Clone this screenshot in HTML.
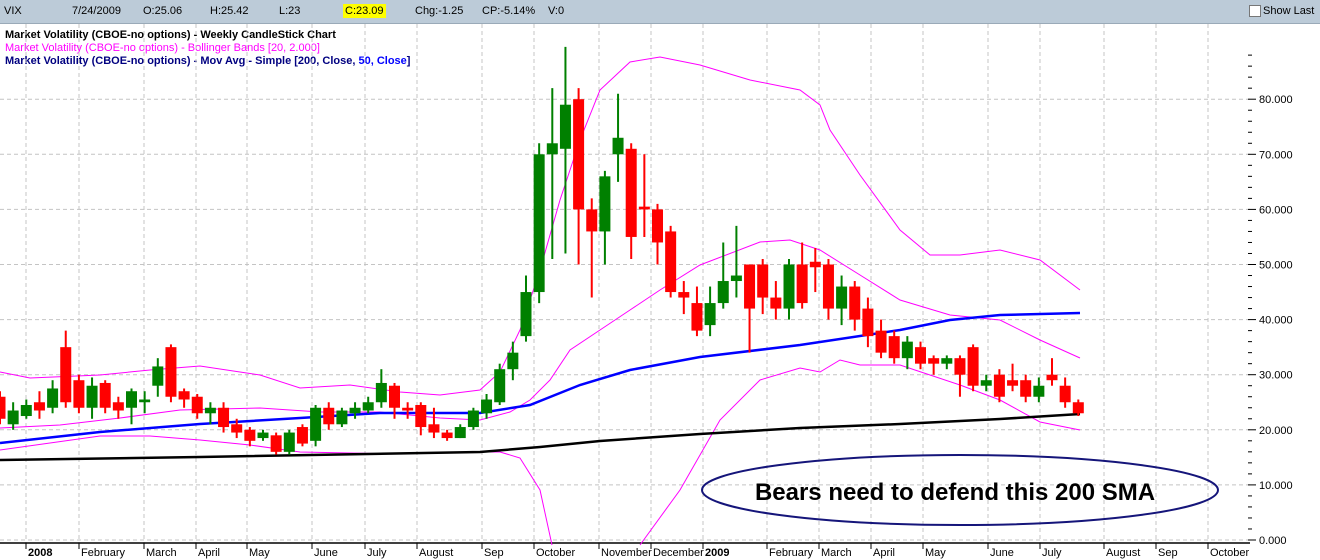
<!DOCTYPE html>
<html><head><meta charset="utf-8"><style>
body{margin:0;width:1320px;height:560px;overflow:hidden;background:#fff;font-family:"Liberation Sans",Tahoma,sans-serif}
#top{position:absolute;left:0;top:0;width:1320px;height:23px;background:#bccbd8;border-bottom:1px solid #9aaab8;font-size:11px;color:#000}
#top span{position:absolute;top:5px}
svg{position:absolute;left:0;top:0}
</style></head><body>
<div id="top">
<span style="left:4px">VIX</span>
<span style="left:72px">7/24/2009</span>
<span style="left:143px">O:25.06</span>
<span style="left:210px">H:25.42</span>
<span style="left:279px">L:23</span>
<span style="left:343px;top:4px;background:#ffff00;padding:1px 2px">C:23.09</span>
<span style="left:415px">Chg:-1.25</span>
<span style="left:482px">CP:-5.14%</span>
<span style="left:548px">V:0</span>
<span style="left:1249px;top:5px;width:10px;height:10px;border:1px solid #777;background:#fff"></span>
<span style="left:1263px">Show Last</span>
</div>
<svg id="c" width="1320" height="560" viewBox="0 0 1320 560" style="top:0">
<g font-size="11" font-weight="bold">
<text x="5" y="38" fill="#000">Market Volatility (CBOE-no options) - Weekly CandleStick Chart</text>
<text x="5" y="51" fill="#ff00ff" font-weight="normal">Market Volatility (CBOE-no options) - Bollinger Bands [20, 2.000]</text>
<text x="5" y="64" fill="#000080">Market Volatility (CBOE-no options) - Mov Avg - Simple [200, Close, <tspan fill="#0000ff">50, Close</tspan>]</text>
</g>
</svg>
<script>
const s=document.getElementById('c'),NS='http://www.w3.org/2000/svg';
function el(t,a,txt){const e=document.createElementNS(NS,t);for(const k in a)e.setAttribute(k,a[k]);if(txt)e.textContent=txt;s.insertBefore(e,s.firstChild.nextSibling?null:null);s.appendChild(e);return e}
const Y=v=>540-5.51*v;
// grid
const months=[[26,'2008',1],[79,'February'],[144,'March'],[196,'April'],[247,'May'],[312,'June'],[365,'July'],[417,'August'],[482,'Sep'],[534,'October'],[599,'November'],[651,'December'],[703,'2009',1],[767,'February'],[819,'March'],[871,'April'],[923,'May'],[988,'June'],[1040,'July'],[1104,'August'],[1156,'Sep'],[1208,'October']];
months.forEach(m=>{el('line',{x1:m[0],x2:m[0],y1:24,y2:543,stroke:'#c4c4c4','stroke-dasharray':'4,3'});
el('text',{x:m[0]+2,y:556,'font-size':11,'font-weight':m[2]?'bold':'normal',fill:'#000'},m[1]);
el('line',{x1:m[0],x2:m[0],y1:543,y2:549,stroke:'#000'});});
for(let v=0;v<=80;v+=10){el('line',{x1:0,x2:1250,y1:Y(v),y2:Y(v),stroke:'#c4c4c4','stroke-dasharray':'4,3'});
el('text',{x:1259,y:Y(v)+4,'font-size':11,fill:'#000'},v.toFixed(3));}
for(let v=0;v<=88;v+=2){el('line',{x1:v%10?1248:1248,x2:v%10?1252:1256,y1:Y(v),y2:Y(v),stroke:'#000'});}
el('line',{x1:0,x2:1250,y1:543,y2:543,stroke:'#000','stroke-width':1.5});
function pl(p,c,w){el('polyline',{points:p.map(q=>q.join(',')).join(' '),fill:'none',stroke:c,'stroke-width':w})}
pl([[0,372],[30,378],[100,375],[150,370],[200,366],[260,375],[300,388],[350,385],[400,392],[440,395],[480,390],[500,372],[520,330],[540,270],[560,200],[580,140],[600,90],[630,62],[660,57],[700,65],[750,80],[800,90],[820,105],[830,130],[860,175],[900,230],[930,255],[960,255],[1000,250],[1040,260],[1080,290]],'#ff00ff',1);
pl([[0,428],[60,425],[120,418],[180,410],[260,408],[320,412],[380,412],[440,418],[480,420],[510,412],[530,400],[550,380],[570,350],[600,330],[630,310],[660,290],[700,265],[760,242],[790,240],[820,250],[860,275],[900,300],[950,315],[1000,320],[1040,340],[1080,358]],'#ff00ff',1);
pl([[0,450],[50,443],[100,436],[150,436],[200,440],[250,445],[300,452],[400,454],[450,452],[500,452],[520,458],[540,490],[552,545]],'#ff00ff',1);
pl([[640,545],[680,490],[720,420],[760,380],[800,368],[820,372],[840,360],[860,365],[900,365],[930,375],[960,385],[1000,400],[1040,422],[1080,430]],'#ff00ff',1);
pl([[0,460],[200,457],[480,452],[540,447],[600,441],[700,434],[800,428],[900,424],[1000,419],[1080,414]],'#000',2.5);
pl([[0,443],[100,432],[200,424],[300,418],[380,413],[480,413],[530,405],[580,385],[630,370],[700,357],[800,345],[900,330],[950,320],[1000,315],[1080,313]],'#0000ff',2.5);
const d=[[26,22,27,21],[21,23.5,25,20],[22.5,24.5,25.5,22],[25,23.5,27,22],[24,27.5,29,23],[35,25,38,24],[29,24,30,23],[24,28,29.5,22],[28.5,24,29,23],[25,23.5,26,22],[24,27,27.5,21],[25,25.5,27,23],[28,31.5,33,26],[35,26,35.5,25],[27,25.5,27.5,24],[26,23,26.5,22],[23,24,25,21],[24,20.5,25,19.5],[21,19.5,22,18.5],[20,18,20.5,17],[18.5,19.5,20,18],[19,16,19.5,15.5],[16,19.5,20,15.5],[20.5,17.5,21,17],[18,24,24.5,17],[24,21,25,20],[21,23.5,24,20.5],[23,24,25,22],[23.5,25,26,23],[25,28.5,31,24],[28,24,28.5,22],[24,23.5,25,22],[24.5,20.5,25,19],[21,19.5,24,18.5],[19.5,18.5,20,18],[18.5,20.5,21,18.5],[20.5,23.5,24,20],[23,25.5,26.5,22],[25,31,32,24.5],[31,34,36,29],[37,45,48,36],[45,70,72,43],[70,72,82,51],[71,79,89.5,52],[80,60,82,50],[60,56,62,44],[56,66,67,50],[70,73,81,65],[71,55,72,51],[60.5,60,70,55],[60,54,61,50],[56,45,57,44],[45,44,47,41],[43,38,46,37],[39,43,46,37],[43,47,54,42],[47,48,57,44],[50,42,50,34],[50,44,51,41],[44,42,47,40],[42,50,51,40],[50,43,54,42],[50.5,49.5,53,45],[50,42,51,40],[42,46,48,39],[46,40,47,38],[42,37,44,35],[38,34,40,33],[37,33,38,32],[33,36,37,31],[35,32,36,31],[33,32,33.5,30],[32,33,33.5,31],[33,30,33.5,26],[35,28,35.5,27],[28,29,30,27],[30,26,31,25],[29,28,32,27],[29,26,30,25],[26,28,29.5,25],[30,29,33,28],[28,25,29.5,24],[25,23,25.5,22.5]];
d.forEach((c,i)=>{const x=i*13.15;const col=c[1]>=c[0]?'#008000':'#ff0000';
el('line',{x1:x,x2:x,y1:Y(c[2]),y2:Y(c[3]),stroke:col,'stroke-width':2});
const t=Y(Math.max(c[0],c[1])),b=Y(Math.min(c[0],c[1]));
el('rect',{x:x-5.5,y:t,width:11,height:Math.max(2,b-t),fill:col});});
el('ellipse',{cx:960,cy:490,rx:258,ry:35,fill:'none',stroke:'#15157a','stroke-width':2});
el('text',{x:955,y:500,'font-size':24,'font-weight':'bold','text-anchor':'middle',fill:'#000'},'Bears need to defend this 200 SMA');
</script>
</body></html>
